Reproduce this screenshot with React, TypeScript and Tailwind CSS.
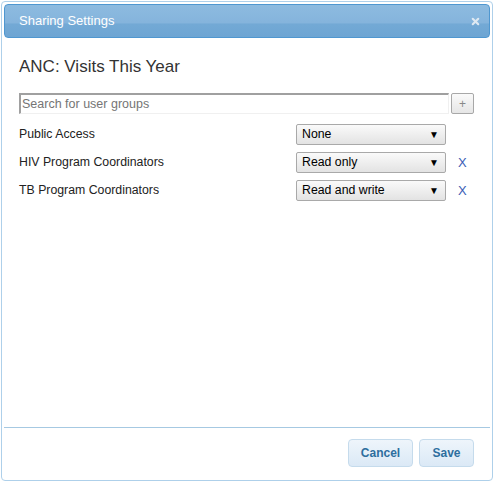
import { X } from "lucide-react";

const rows = [
  { name: "Public Access", value: "None", removable: false },
  { name: "HIV Program Coordinators", value: "Read only", removable: true },
  { name: "TB Program Coordinators", value: "Read and write", removable: true },
];

function Select({ value }: { value: string }) {
  return (
    <div className="flex h-[21px] w-[150px] items-center justify-between rounded-[2px] border border-[#a9a9a9] bg-gradient-to-b from-[#fafafa] to-[#e3e3e3] pl-[5px] pr-[6px] text-[12.3px] text-black">
      <span>{value}</span>
      <span className="text-[10px] leading-none">▼</span>
    </div>
  );
}

export default function App() {
  return (
    <div className="h-[482px] w-[494px] bg-white p-px font-['Liberation_Sans',Arial,sans-serif]">
      <div className="flex h-[480px] w-[492px] flex-col rounded-[4px] border border-[#aed0ea] bg-white p-[2px]">
        {/* title bar */}
        <div className="flex h-[34px] items-center justify-between rounded-[4px] border border-[#4f97d0] bg-[linear-gradient(to_bottom,#8dbbe0_0%,#85b4dc_55%,#73a9d5_60%,#6da5d3_100%)] pl-[14px] pr-[8px]">
          <span className="text-[13px] text-white">Sharing Settings</span>
          <X size={11} strokeWidth={4.5} className="text-[#dfe9f2]" />
        </div>

        {/* content */}
        <div className="flex flex-1 flex-col px-[15px]">
          <h2 className="mt-[19px] text-[17px] leading-[20px] text-[#333]">ANC: Visits This Year</h2>

          <div className="mt-[16px] flex items-center gap-[2px]">
            <input
              placeholder="Search for user groups"
              className="h-[21px] w-[430px] border border-t-2 border-l-2 border-[#a0a0a0] border-b-[#f0f0f0] border-r-[#f0f0f0] px-[1px] text-[12.5px] text-black outline-none placeholder:text-[#757575]"
            />
            <button className="flex h-[21px] w-[23px] items-center justify-center rounded-[2px] border border-[#a8a8a8] bg-gradient-to-b from-[#fafafa] to-[#e6e6e6] text-[12px] text-[#888]">
              +
            </button>
          </div>

          <div className="mt-[10px] flex flex-col gap-[7px]">
            {rows.map((r) => (
              <div key={r.name} className="flex items-center text-[12.3px] text-[#222]">
                <span className="w-[277px]">{r.name}</span>
                <Select value={r.value} />
                {r.removable && <span className="ml-[12px] text-[13px] text-[#3b5db5]">X</span>}
              </div>
            ))}
          </div>
        </div>

        {/* footer */}
        <div className="flex h-[51px] items-center justify-end gap-[6px] border-t border-[#a6c9e2] pr-[16px]">
          <button className="h-[28px] w-[65px] rounded-[4px] border border-[#c5dbec] bg-gradient-to-b from-[#eef5fb] to-[#dbe9f6] text-[12px] font-bold text-[#2e6e9e]">
            Cancel
          </button>
          <button className="h-[28px] w-[55px] rounded-[4px] border border-[#c5dbec] bg-gradient-to-b from-[#eef5fb] to-[#dbe9f6] text-[12px] font-bold text-[#2e6e9e]">
            Save
          </button>
        </div>
      </div>
    </div>
  );
}
